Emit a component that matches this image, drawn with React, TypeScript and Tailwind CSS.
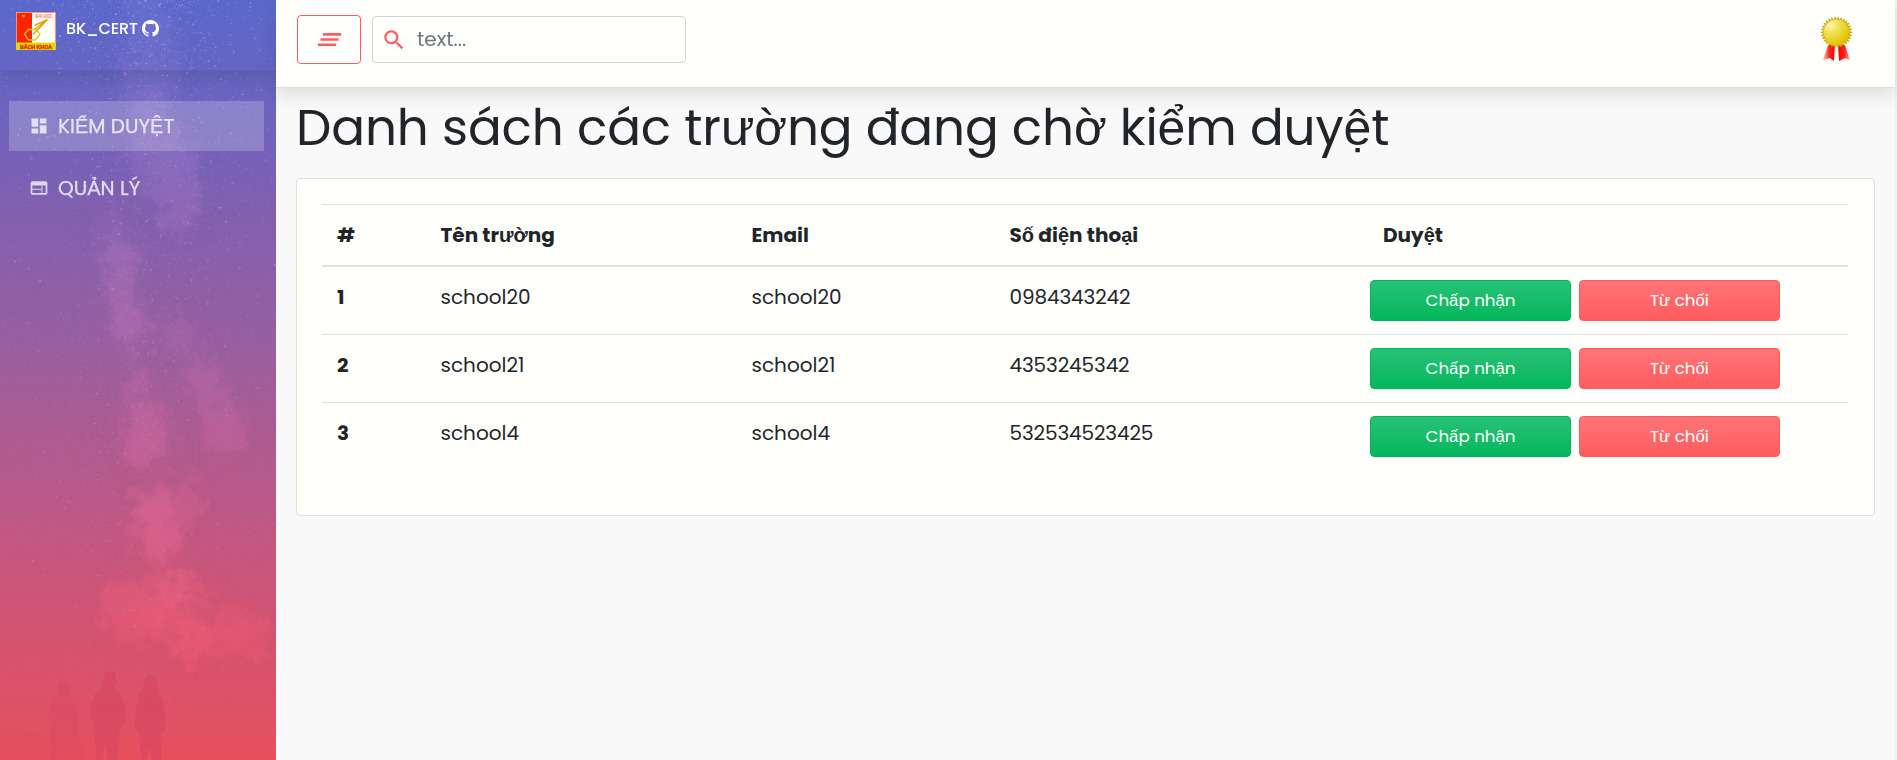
import type { ReactNode } from "react";
import { MdClearAll, MdDashboard, MdSearch, MdWeb } from "react-icons/md";

type School = { name: string; email: string; phone: string };

const schools: School[] = [
  { name: "school20", email: "school20", phone: "0984343242" },
  { name: "school21", email: "school21", phone: "4353245342" },
  { name: "school4", email: "school4", phone: "532534523425" },
];

const columns = "grid grid-cols-[103.5px_311px_258px_360.5px_1fr]";

function createRandom(seed: number) {
  let state = seed;
  return () => {
    state = (state * 1664525 + 1013904223) % 4294967296;
    return state / 4294967296;
  };
}

const random = createRandom(42);

const stars = Array.from({ length: 5200 }, () => {
  const y = Math.pow(random(), 1.25) * 700;
  const center = 140 + Math.sin(y / 110) * 18;
  const spread = random() + random() + random() - 1.5;
  const x = random() < 0.6 ? center + spread * 90 : random() * 276;
  return { x, y, size: random() < 0.12 ? 1.6 : 1, opacity: 0.1 + Math.pow(random(), 2) * 0.4 };
});

const clouds = [
  [150, 60, 28, 90, 0.4],
  [178, 185, 22, 50, 0.6],
  [150, 140, 24, 50, 0.5],
  [112, 235, 14, 36, 0.3],
  [122, 285, 15, 55, 0.8],
  [130, 330, 14, 28, 0.7],
  [137, 383, 10, 14, 0.8],
  [178, 335, 16, 24, 0.4],
  [205, 385, 17, 28, 0.6],
  [146, 435, 22, 34, 0.8],
  [225, 428, 20, 28, 0.6],
  [156, 525, 23, 38, 1],
  [190, 500, 9, 24, 0.6],
  [172, 595, 17, 24, 1],
  [203, 592, 9, 10, 0.9],
  [140, 610, 40, 30, 0.6],
  [190, 640, 13, 22, 0.9],
  [235, 635, 34, 24, 0.5],
];

function NightSky() {
  const ellipses = clouds.map(([cx, cy, rx, ry, opacity], i) => (
    <ellipse key={i} cx={cx} cy={cy} rx={rx} ry={ry} opacity={opacity} />
  ));
  return (
    <svg className="absolute inset-0 h-full w-full" viewBox="0 0 276 760" preserveAspectRatio="none" aria-hidden="true">
      <defs>
        <linearGradient id="dusk" x1="0" y1="0" x2="0" y2="1">
          <stop offset="0" stopColor="#5a68cb" />
          <stop offset="0.13" stopColor="#6a64bf" />
          <stop offset="0.27" stopColor="#8060b0" />
          <stop offset="0.45" stopColor="#985fa0" />
          <stop offset="0.62" stopColor="#b45a8c" />
          <stop offset="0.8" stopColor="#d05474" />
          <stop offset="0.95" stopColor="#e05165" />
          <stop offset="1" stopColor="#e84f5d" />
        </linearGradient>
        <linearGradient id="cloud" gradientUnits="userSpaceOnUse" x1="0" y1="0" x2="0" y2="760">
          <stop offset="0" stopColor="#8080dc" />
          <stop offset="0.45" stopColor="#bd70b0" />
          <stop offset="0.7" stopColor="#e26690" />
          <stop offset="0.82" stopColor="#f86078" />
          <stop offset="1" stopColor="#f85c70" />
        </linearGradient>
        <filter id="mist" x="-20%" y="-20%" width="140%" height="140%" colorInterpolationFilters="sRGB">
          <feTurbulence type="fractalNoise" baseFrequency="0.06" numOctaves="5" seed="5" result="noise" />
          <feGaussianBlur in="SourceGraphic" stdDeviation="6" result="soft" />
          <feDisplacementMap in="soft" in2="noise" scale="50" xChannelSelector="R" yChannelSelector="G" />
        </filter>
        <filter id="glow" x="-20%" y="-20%" width="140%" height="140%" colorInterpolationFilters="sRGB">
          <feGaussianBlur stdDeviation="12" />
        </filter>
        <filter id="blur"><feGaussianBlur stdDeviation="0.7" /></filter>
      </defs>
      <rect width="276" height="760" fill="url(#dusk)" />
      <g filter="url(#glow)" fill="url(#cloud)" opacity="0.3">{ellipses}</g>
      <g filter="url(#mist)" fill="url(#cloud)" opacity="0.5">{ellipses}</g>
      <g fill="#d4bef2">
        {stars.map((s, i) => (
          <rect key={i} x={s.x} y={s.y} width={s.size} height={s.size} opacity={s.opacity * (1 - s.y / 1000)} />
        ))}
      </g>
      <g fill="#d4445f" opacity="0.5" filter="url(#blur)">
        <path d="M104 680q0-9 6-9t6 9q0 6-3 9 10 5 12 20l0 12-6 12-2 27h-9l-2-20-4 20h-6l-1-32-5-14q1-20 13-25-2-4-1-9z" />
        <path d="M144 684q1-9 6-9t7 9l2 9q5 8 6 22v16l-4 1v28h-9l-2-14-4 14h-5l-2-28-4-1 1-22q2-14 6-18z" />
        <path opacity="0.4" d="M58 689q1-8 6-8t6 9l1 7q7 8 7 20l-1 14 6 16 2 13H50V730l-2-14q2-14 10-19z" />
        <path opacity="0.25" d="M0 730l20-3 20 9 20 7v17H0z" />
      </g>
    </svg>
  );
}

function SchoolLogo() {
  return (
    <svg className="h-[38px] w-[40px]" viewBox="0 0 40 38" aria-hidden="true">
      <rect width="40" height="38" fill="#fff" />
      <rect width="16" height="31" fill="#fb2406" />
      <rect x="0.5" y="0.5" width="39" height="37" fill="none" stroke="#ff8d80" />
      <rect y="30.5" width="40" height="7.5" fill="#dcdc08" />
      <path d="M6 3.500h3l-1.500 2z" stroke="#ff9d00" fill="#ff9d00" />
      <path d="M8.500 22l4-4.500h7l4.500 4.500-4.500 6h-7z" fill="none" stroke="#dcd00c" strokeWidth="1.300" />
      <path d="M31.500 7.500 18.500 13.500M31.500 7.500 17 22.500M31.500 7.500 19 17" fill="none" stroke="#dda60c" strokeWidth="1.400" />
      <text x="19.500" y="5.500" fontSize="4.500" fontWeight="700" fill="#ff6b58" textLength="17" lengthAdjust="spacingAndGlyphs" fontFamily="Liberation Sans, sans-serif">ĐẠI HỌC</text>
      <text x="4" y="36.600" fontSize="5.600" fontWeight="700" fill="#e33b05" stroke="#e33b05" strokeWidth="0.500" textLength="32" lengthAdjust="spacingAndGlyphs" fontFamily="Liberation Sans, sans-serif">BÁCH KHOA</text>
    </svg>
  );
}

function GithubMark() {
  return (
    <svg className="size-[17px]" viewBox="0 0 16 16" fill="currentColor" aria-hidden="true">
      <path fillRule="evenodd" d="M8 0C3.58 0 0 3.58 0 8c0 3.54 2.29 6.53 5.47 7.59.4.07.55-.17.55-.38 0-.19-.01-.82-.01-1.49-2.01.37-2.53-.49-2.69-.94-.09-.23-.48-.94-.82-1.13-.28-.15-.68-.52-.01-.53.63-.01 1.08.58 1.23.82.72 1.21 1.87.87 2.33.66.07-.52.28-.87.51-1.07-1.78-.2-3.64-.89-3.64-3.95 0-.87.31-1.59.82-2.15-.08-.2-.36-1.02.08-2.12 0 0 .67-.21 2.2.82.64-.18 1.32-.27 2-.27.68 0 1.36.09 2 .27 1.53-1.04 2.2-.82 2.2-.82.44 1.1.16 1.92.08 2.12.51.56.82 1.27.82 2.15 0 3.07-1.87 3.75-3.65 3.95.29.25.54.73.54 1.48 0 1.07-.01 1.93-.01 2.2 0 .21.15.46.55.38A8.013 8.013 0 0 0 16 8c0-4.42-3.58-8-8-8z" />
    </svg>
  );
}

const teeth = Array.from({ length: 60 }, (_, i) => {
  const angle = (i * Math.PI) / 30;
  const r = i % 2 ? 13.2 : 16.2;
  return `${(16.5 + Math.cos(angle) * r).toFixed(2)},${(16.3 + Math.sin(angle) * r).toFixed(2)}`;
}).join(" ");

function Medal() {
  return (
    <svg className="h-[46px] w-[33px]" viewBox="0 0 33 46" aria-hidden="true">
      <defs>
        <radialGradient id="gold" cx="0.28" cy="0.22" r="0.85">
          <stop offset="0" stopColor="#fbf6b4" />
          <stop offset="0.35" stopColor="#efe25a" />
          <stop offset="0.75" stopColor="#e8cd12" />
          <stop offset="1" stopColor="#dcb90a" />
        </radialGradient>
        <linearGradient id="left" x1="1" x2="0"><stop stopColor="#f80400" /><stop offset="0.45" stopColor="#ff2418" /><stop offset="1" stopColor="#ffc4bc" /></linearGradient>
        <linearGradient id="right"><stop stopColor="#f80400" /><stop offset="0.55" stopColor="#ff2418" /><stop offset="1" stopColor="#ffb4ac" /></linearGradient>
      </defs>
      <path d="M8 29h7l-1 16-4-3-7 2z" fill="url(#left)" />
      <path d="M18 29h7l5 15-5-2-6 3z" fill="url(#right)" />
      <polygon points={teeth} fill="#c3a51c" />
      <circle cx="16.500" cy="16.300" r="13.200" fill="url(#gold)" stroke="#d9bb18" strokeWidth="0.800" />
    </svg>
  );
}

function NavItem({ icon, children, active }: { icon: ReactNode; children: ReactNode; active?: boolean }) {
  return (
    <a className={`flex h-[50px] items-center gap-[9px] pl-5 text-[20px] text-white/75 [-webkit-text-stroke:0.25px] ${active ? "bg-white/20" : ""}`}>
      {icon}
      <span>{children}</span>
    </a>
  );
}

function Sidebar() {
  return (
    <aside className="relative w-[276px] shrink-0 overflow-hidden">
      <NightSky />
      <div className="relative flex h-[70px] items-start px-4 pt-3 shadow-[0_8px_16px_rgba(0,0,0,0.1)]">
        <SchoolLogo />
        <div className="ml-[10px] flex h-[33px] items-center gap-[4px] text-base font-medium text-white">
          <span className="tracking-[-0.150px]">BK_CERT</span>
          <GithubMark />
        </div>
      </div>
      <nav className="relative flex flex-col gap-3 pt-[31px] pr-3 pl-[9px]">
        <NavItem active icon={<MdDashboard className="size-[20px]" />}>KIỂM DUYỆT</NavItem>
        <NavItem icon={<MdWeb className="size-[20px]" />}>QUẢN LÝ</NavItem>
      </nav>
    </aside>
  );
}

function TopBar() {
  return (
    <header className="relative flex h-[88px] items-start border-b border-[#dedede] bg-[#fffffc] pl-[21px] shadow-[0_8px_16px_rgba(0,0,0,0.1)]">
      <button className="mt-[15px] flex h-[49px] w-[64px] items-center justify-center rounded border border-[#ff5c5f] text-[#ff5c5f]">
        <MdClearAll className="size-[31px]" />
      </button>
      <label className="mt-4 ml-[11px] flex h-[47px] w-[314px] items-center rounded border border-[#ced4da] pl-[8px]">
        <MdSearch className="size-[26px] text-[#ff5c5f]" />
        <span className="ml-[10px] pb-px text-[20px] text-[#6c757d]">text...</span>
      </label>
      <div className="mt-4 mr-[42px] ml-auto"><Medal /></div>
    </header>
  );
}

function ActionButton({ children, tone }: { children: ReactNode; tone: "green" | "red" }) {
  const colors =
    tone === "green"
      ? "border-[#00b65b] from-[#26c277] to-[#00b65b]"
      : "border-[#ff5c5f] from-[#ff7477] to-[#ff5c5f]";
  return (
    <button className={`flex h-[41px] w-[201px] items-center justify-center rounded border bg-linear-to-b pb-[2px] text-[16.7px] text-white ${colors}`}>
      {children}
    </button>
  );
}

function SchoolTable() {
  return (
    <section className="mt-[19px] h-[338px] w-[1579px] rounded border border-[#dfdfdf] bg-[#fffffc] pt-[25px] pr-[26px] pl-[25px] text-[20px] leading-[30px]">
      <div className={`${columns} h-[63px] items-center border-t border-b-2 border-[#dee2e6] pl-[15px] font-bold`}>
        <div>#</div>
        <div>Tên trường</div>
        <div>Email</div>
        <div>Số điện thoại</div>
        <div className="pl-[13px]">Duyệt</div>
      </div>
      {schools.map((school, i) => (
        <div key={school.name} className={`${columns} pl-[15px] ${i > 0 ? "h-[68px] border-t border-[#dee2e6]" : "h-[67px]"}`}>
          <div className="pt-[15px] font-bold">{i + 1}</div>
          <div className="pt-[15px]">{school.name}</div>
          <div className="pt-[15px]">{school.email}</div>
          <div className="pt-[15px] tracking-[-0.12px]">{school.phone}</div>
          <div className="flex gap-2 pt-[13px]">
            <ActionButton tone="green">Chấp nhận</ActionButton>
            <ActionButton tone="red">Từ chối</ActionButton>
          </div>
        </div>
      ))}
    </section>
  );
}

export default function App() {
  return (
    <div className="flex h-[760px] w-full overflow-hidden bg-[#f9f9f9] font-['Poppins','Liberation_Sans',sans-serif] text-[#212529]">
      <Sidebar />
      <div className="flex min-w-0 flex-1 flex-col border-r-2 border-[#f1f1f1]">
        <TopBar />
        <main className="pl-5">
          <h1 className="mt-[11px] h-[60px] text-[50px] leading-[58px] tracking-[-0.12px] whitespace-nowrap">Danh sách các trường đang chờ kiểm duyệt</h1>
          <SchoolTable />
        </main>
      </div>
    </div>
  );
}
